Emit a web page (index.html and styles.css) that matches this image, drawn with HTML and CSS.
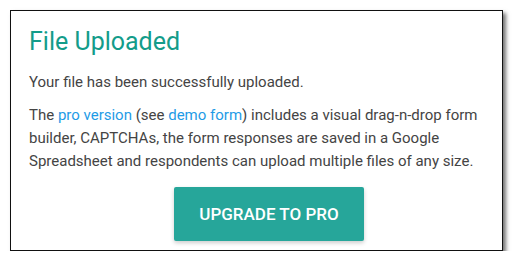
FILE: index.html
```html
<!DOCTYPE html>
<html>
<head>
<meta charset="utf-8">
<link rel="stylesheet" href="styles.css">
</head>
<body>
<div class="card">
  <h1 class="title">File Uploaded</h1>
  <p class="text">Your file has been successfully uploaded.</p>
  <p class="text">The <a href="#">pro version</a> (see <a href="#">demo form</a>) includes a visual drag-n-drop form builder, CAPTCHAs, the form responses are saved in a Google Spreadsheet and respondents can upload multiple files of any size.</p>
  <div class="actions"><a class="btn" href="#">UPGRADE TO PRO</a></div>
</div>
</body>
</html>
```
FILE: styles.css
```css
html, body { margin: 0; padding: 0; background: #fff; }
body { padding: 10px 0 0 10px; font-family: Roboto, "Noto Sans", sans-serif; }
.card {
  box-sizing: border-box;
  width: 493px;
  height: 241px;
  border: 1px solid #111;
  background: #fff;
  box-shadow: 3px 3px 4px rgba(0,0,0,0.55);
  padding: 16px 18px 0 18px;
}
.title {
  margin: 0;
  font-weight: 400;
  font-size: 25px;
  line-height: 30px;
  color: #139c8a;
}
.text {
  margin: 14px 0 0 0;
  font-size: 15px;
  line-height: 23px;
  color: #444;
}
.text + .text { margin-top: 10px; }
.text a { color: #1e9be6; text-decoration: none; }
.actions { display: flex; justify-content: center; margin-top: 14px; padding-left: 25px; }
.btn {
  display: flex; align-items: center; justify-content: center;
  width: 190px; height: 54px;
  background: #26a69a;
  color: #fff;
  font-weight: 500;
  font-size: 17px;
  text-decoration: none;
  border-radius: 2px;
  box-shadow: 0 2px 4px rgba(0,0,0,0.2);
}
```
